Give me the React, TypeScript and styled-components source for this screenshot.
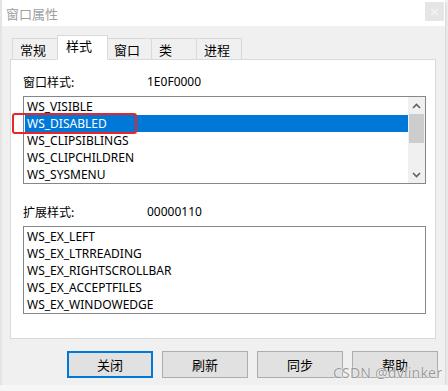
import React from 'react'
import styled, { createGlobalStyle } from 'styled-components'

const GlobalStyle = createGlobalStyle`
  html, body {
    margin: 0;
    padding: 0;
    background: #f6f6f6;
  }
  body {
    font-family: "Noto Sans", "Noto Sans CJK SC", sans-serif;
  }
`

const tabs = ['常规', '样式', '窗口', '类', '进程']
const styles = ['WS_VISIBLE', 'WS_DISABLED', 'WS_CLIPSIBLINGS', 'WS_CLIPCHILDREN', 'WS_SYSMENU']
const exStyles = ['WS_EX_LEFT', 'WS_EX_LTRREADING', 'WS_EX_RIGHTSCROLLBAR', 'WS_EX_ACCEPTFILES', 'WS_EX_WINDOWEDGE']
const buttons = ['关闭', '刷新', '同步', '帮助']

const ChevronUp = () => (
  <svg width="9" height="6" viewBox="0 0 9 6">
    <path d="M1 5 L4.5 1.5 L8 5" stroke="#606060" strokeWidth="1.6" fill="none" />
  </svg>
)

const ChevronDown = () => (
  <svg width="9" height="6" viewBox="0 0 9 6">
    <path d="M1 1 L4.5 4.5 L8 1" stroke="#606060" strokeWidth="1.6" fill="none" />
  </svg>
)

const App = () => {
  return (
    <>
      <GlobalStyle />
      <Window>
        <TitleBar>
          <Title>窗口属性</Title>
          <CloseButton>×</CloseButton>
        </TitleBar>
        <Body>
          <TabRow>
            {tabs.map((t) => (
              <Tab key={t} $active={t === '样式'}>{t}</Tab>
            ))}
          </TabRow>
          <Panel>
            <FieldRow>
              <Label>窗口样式:</Label>
              <Value>1E0F0000</Value>
            </FieldRow>
            <ListBox>
              <Rows>
                {styles.map((s) => (
                  <Row key={s} $selected={s === 'WS_DISABLED'}>{s}</Row>
                ))}
              </Rows>
              <ScrollBar>
                <ScrollArrow><ChevronUp /></ScrollArrow>
                <Thumb />
                <ScrollSpacer />
                <ScrollArrow><ChevronDown /></ScrollArrow>
              </ScrollBar>
            </ListBox>
            <FieldRow $top={19}>
              <Label>扩展样式:</Label>
              <Value>00000110</Value>
            </FieldRow>
            <ListBox>
              <Rows>
                {exStyles.map((s) => (
                  <Row key={s}>{s}</Row>
                ))}
              </Rows>
            </ListBox>
          </Panel>
          <ButtonRow>
            {buttons.map((b) => (
              <Button key={b} $default={b === '关闭'}>{b}</Button>
            ))}
          </ButtonRow>
        </Body>
        <Marker />
        <Watermark>CSDN @dvlinker</Watermark>
      </Window>
    </>
  )
}

const Window = styled.div`
  position: relative;
  width: 445px;
  height: 385px;
  background: #f0f0f0;
  box-sizing: border-box;
  border-left: 2px solid #e4e4e4;
  box-shadow: 1px 2px 4px rgba(0, 0, 0, 0.18);
`

const TitleBar = styled.div`
  height: 26px;
  background: #ffffff;
  display: flex;
  align-items: center;
  justify-content: space-between;
  padding-left: 4px;
  padding-right: 1px;
`

const Title = styled.div`
  font-size: 13px;
  color: #a0a0a0;
  font-family: "Noto Sans CJK SC", sans-serif;
`

const CloseButton = styled.div`
  width: 19px;
  height: 19px;
  margin-top: -3px;
  background: #e5e5e5;
  color: #f4f4f4;
  font-size: 13px;
  line-height: 19px;
  text-align: center;
  font-family: "DejaVu Sans", sans-serif;
  font-weight: bold;
`

const Body = styled.div`
  padding: 9px 0 0 8px;
`

const TabRow = styled.div`
  display: flex;
  align-items: flex-end;
  height: 25px;
  padding-left: 2px;
  position: relative;
  z-index: 1;
  margin-bottom: -1px;
`

const Tab = styled.div<{ $active?: boolean }>`
  box-sizing: border-box;
  height: ${(p) => (p.$active ? '25px' : '22px')};
  width: ${(p) => (p.$active ? '51px' : '46px')};
  margin-left: -1px;
  margin-right: ${(p) => (p.$active ? '-1px' : '0')};
  border: 1px solid #d9d9d9;
  border-bottom: ${(p) => (p.$active ? '1px solid #ffffff' : '1px solid #d9d9d9')};
  background: ${(p) => (p.$active ? '#ffffff' : '#f0f0f0')};
  position: relative;
  z-index: ${(p) => (p.$active ? 2 : 0)};
  font-family: "Noto Sans CJK SC", sans-serif;
  font-size: 13px;
  color: #000;
  padding-left: ${(p) => (p.$active ? '8px' : '7px')};
  line-height: ${(p) => (p.$active ? '20px' : '22px')};
  &:first-child {
    margin-left: 0;
  }
`

const Panel = styled.div`
  box-sizing: border-box;
  width: 426px;
  height: 280px;
  background: #ffffff;
  border: 1px solid #d9d9d9;
  padding: 13px 0 0 12px;
`

const FieldRow = styled.div<{ $top?: number }>`
  display: flex;
  align-items: center;
  height: 16px;
  margin-top: ${(p) => p.$top ?? 0}px;
  margin-bottom: 7px;
  font-family: "Noto Sans CJK SC", sans-serif;
  font-size: 12px;
  color: #000;
`

const Label = styled.div`
  width: 124px;
`

const Value = styled.div`
  font-family: "Noto Sans", sans-serif;
  font-size: 12px;
`

const ListBox = styled.div`
  box-sizing: border-box;
  width: 403px;
  height: 88px;
  border: 1px solid #828790;
  display: flex;
  padding: 1px 0 1px 1px;
`

const Rows = styled.div`
  flex: 1;
  display: flex;
  flex-direction: column;
`

const Row = styled.div<{ $selected?: boolean }>`
  height: 17px;
  line-height: 17px;
  padding-left: 2px;
  font-family: "Noto Sans", sans-serif;
  font-size: 12px;
  background: ${(p) => (p.$selected ? '#0078d7' : 'transparent')};
  color: ${(p) => (p.$selected ? '#ffffff' : '#000000')};
`

const ScrollBar = styled.div`
  width: 17px;
  margin-top: -1px;
  margin-bottom: -1px;
  background: #f0f0f0;
  display: flex;
  flex-direction: column;
`

const ScrollArrow = styled.div`
  height: 17px;
  display: flex;
  align-items: center;
  justify-content: center;
`

const Thumb = styled.div`
  height: 29px;
  background: #cdcdcd;
  margin: 0 1px;
`

const ScrollSpacer = styled.div`
  flex: 1;
`

const ButtonRow = styled.div`
  display: flex;
  justify-content: flex-end;
  gap: 9px;
  width: 428px;
  margin-top: 12px;
`

const Button = styled.div<{ $default?: boolean }>`
  box-sizing: border-box;
  width: 86px;
  height: 27px;
  background: #e1e1e1;
  border: ${(p) => (p.$default ? '2px solid #0078d7' : '1px solid #adadad')};
  display: flex;
  align-items: center;
  justify-content: center;
  font-family: "Noto Sans CJK SC", sans-serif;
  font-size: 13px;
  color: #000;
`

const Marker = styled.div`
  position: absolute;
  left: 10px;
  top: 113px;
  width: 125px;
  height: 21px;
  box-sizing: border-box;
  border: 2px solid #e8262a;
  border-radius: 3px;
`

const Watermark = styled.div`
  position: absolute;
  left: 331px;
  top: 364px;
  font-family: "Noto Sans", sans-serif;
  font-size: 14px;
  line-height: 18px;
  color: rgba(120, 120, 120, 0.75);
  text-shadow: 0 0 1px #ffffff, 0 0 1px #ffffff;
  letter-spacing: 0.2px;
`

export default App
